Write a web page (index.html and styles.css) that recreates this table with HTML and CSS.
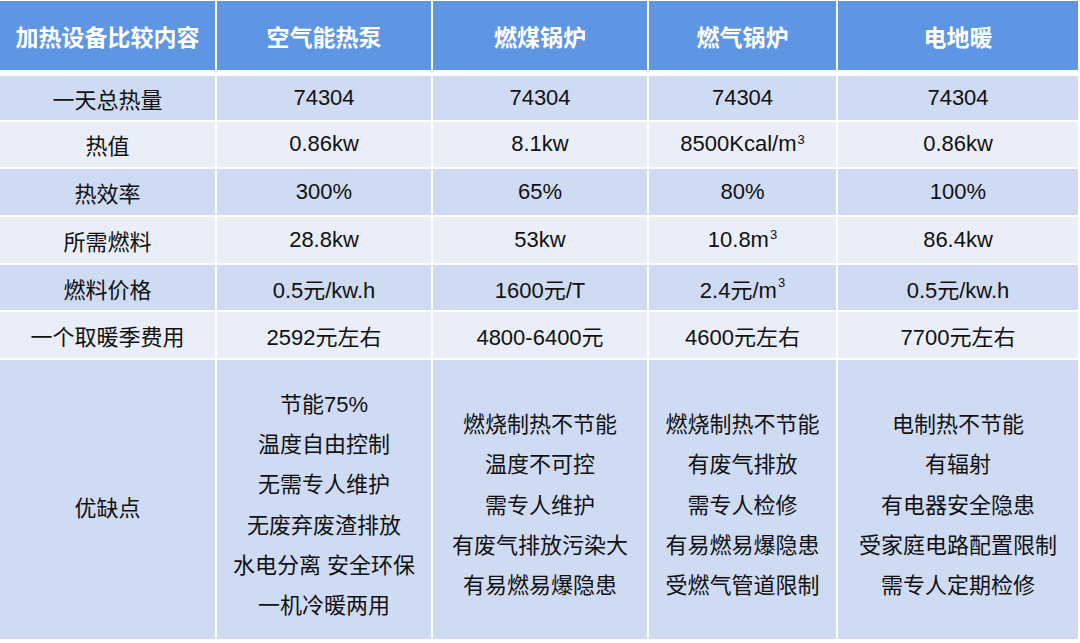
FILE: index.html
```html
<!DOCTYPE html>
<html lang="zh-CN">
<head>
<meta charset="utf-8">
<title>加热设备比较</title>
<link rel="stylesheet" href="styles.css">
</head>
<body>
<div class="table">
  <div class="row head">
    <div class="cell">加热设备比较内容</div>
    <div class="cell">空气能热泵</div>
    <div class="cell">燃煤锅炉</div>
    <div class="cell">燃气锅炉</div>
    <div class="cell">电地暖</div>
  </div>
  <div class="body">
    <div class="cell dark">一天总热量</div>
    <div class="cell dark">74304</div>
    <div class="cell dark">74304</div>
    <div class="cell dark">74304</div>
    <div class="cell dark">74304</div>

    <div class="cell light">热值</div>
    <div class="cell light">0.86kw</div>
    <div class="cell light">8.1kw</div>
    <div class="cell light">8500Kcal/m<span class="sup">3</span></div>
    <div class="cell light">0.86kw</div>

    <div class="cell dark">热效率</div>
    <div class="cell dark">300%</div>
    <div class="cell dark">65%</div>
    <div class="cell dark">80%</div>
    <div class="cell dark">100%</div>

    <div class="cell light">所需燃料</div>
    <div class="cell light">28.8kw</div>
    <div class="cell light">53kw</div>
    <div class="cell light">10.8m<span class="sup">3</span></div>
    <div class="cell light">86.4kw</div>

    <div class="cell dark">燃料价格</div>
    <div class="cell dark">0.5元/kw.h</div>
    <div class="cell dark">1600元/T</div>
    <div class="cell dark">2.4元/m<span class="sup">3</span></div>
    <div class="cell dark">0.5元/kw.h</div>

    <div class="cell light">一个取暖季费用</div>
    <div class="cell light">2592元左右</div>
    <div class="cell light">4800-6400元</div>
    <div class="cell light">4600元左右</div>
    <div class="cell light">7700元左右</div>

    <div class="cell dark tall">优缺点</div>
    <div class="cell dark tall"><div class="lines"><span>节能75%</span><span>温度自由控制</span><span>无需专人维护</span><span>无废弃废渣排放</span><span>水电分离 安全环保</span><span>一机冷暖两用</span></div></div>
    <div class="cell dark tall"><div class="lines"><span>燃烧制热不节能</span><span>温度不可控</span><span>需专人维护</span><span>有废气排放污染大</span><span>有易燃易爆隐患</span></div></div>
    <div class="cell dark tall"><div class="lines"><span>燃烧制热不节能</span><span>有废气排放</span><span>需专人检修</span><span>有易燃易爆隐患</span><span>受燃气管道限制</span></div></div>
    <div class="cell dark tall"><div class="lines"><span>电制热不节能</span><span>有辐射</span><span>有电器安全隐患</span><span>受家庭电路配置限制</span><span>需专人定期检修</span></div></div>
  </div>
</div>
</body>
</html>
```

FILE: styles.css
```css
html, body {
  margin: 0;
  padding: 0;
  background: #ffffff;
}

body {
  width: 1080px;
  height: 643px;
  overflow: hidden;
  font-family: "Liberation Sans", "Noto Sans CJK SC", sans-serif;
  color: #111111;
}

.table {
  padding-top: 1px;
  display: flex;
  flex-direction: column;
  gap: 6px;
}

.row,
.body {
  display: grid;
  grid-template-columns: 215px 214px 214px 187px 240px;
  column-gap: 2px;
}

.body {
  grid-template-rows: 43.5px repeat(5, 45.5px) 279px;
  row-gap: 2.2px;
}

.head {
  height: 69px;
}

.cell {
  display: flex;
  align-items: center;
  justify-content: center;
  text-align: center;
  font-size: 22px;
  white-space: nowrap;
}

.head .cell {
  background: #5f96e4;
  color: #ffffff;
  font-weight: bold;
  font-size: 23px;
}

.dark {
  background: #cfdbf3;
}

.light {
  background: #e9eef8;
}

.tall {
  padding-top: 12px;
  box-sizing: border-box;
}

.lines {
  display: flex;
  flex-direction: column;
  align-items: center;
  line-height: 40.2px;
}

.sup {
  font-size: 13px;
  position: relative;
  top: -5px;
  margin-left: 1px;
}
```
